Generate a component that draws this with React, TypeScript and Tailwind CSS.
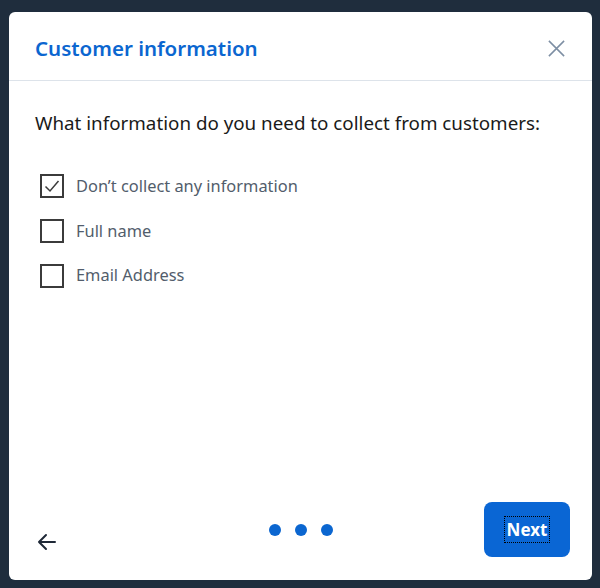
import { useState } from "react";

const options = ["Don’t collect any information", "Full name", "Email Address"];

function CheckBox({ checked }: { checked: boolean }) {
  return (
    <span className="flex h-6 w-6 shrink-0 items-center justify-center border-2 border-[#3b3b3b] bg-white">
      {checked && (
        <svg viewBox="0 0 20 20" className="h-5 w-5" fill="none" stroke="#3b3b3b" strokeWidth="1.5">
          <path d="M3.5 10.5 L8 15 L16.5 5" />
        </svg>
      )}
    </span>
  );
}

export default function App() {
  const [selected, setSelected] = useState<number[]>([0]);

  const toggle = (i: number) =>
    setSelected((s) => (s.includes(i) ? s.filter((x) => x !== i) : [...s, i]));

  return (
    <div className="h-[588px] w-[600px] bg-[#1f2d3d] pb-2 pl-[9px] pr-2 pt-3 font-['Noto_Sans',sans-serif]">
      <div className="flex h-full flex-col rounded-md bg-white">
        <div className="flex h-[69px] shrink-0 items-center justify-between border-b border-[#dde3ea] pl-[26px] pr-[26px] pt-[5px]">
          <h2 className="text-[20.5px] font-semibold text-[#0b66d0]">Customer information</h2>
          <button className="text-[#7d8ea3]">
            <svg viewBox="0 0 20 20" className="h-[19px] w-[19px]" fill="none" stroke="currentColor" strokeWidth="1.6">
              <path d="M2 2 L18 18 M18 2 L2 18" />
            </svg>
          </button>
        </div>

        <div className="flex-1 pl-[26px] pt-[28px]">
          <p className="text-[18.8px] text-[#1a1a1a]">What information do you need to collect from customers:</p>
          <ul className="mt-[37px] flex flex-col gap-[20px] pl-[5px]">
            {options.map((label, i) => (
              <li key={label} className="flex cursor-pointer items-center gap-3" onClick={() => toggle(i)}>
                <CheckBox checked={selected.includes(i)} />
                <span className="text-[16.4px] text-[#525d6b]">{label}</span>
              </li>
            ))}
          </ul>
        </div>

        <div className="grid grid-cols-3 items-center pb-[23px] pl-[26px] pr-[22px]">
          <button className="mt-6 justify-self-start text-[#1f2937]">
            <svg viewBox="0 0 24 24" className="h-6 w-6" fill="none" stroke="currentColor" strokeWidth="2" strokeLinecap="round" strokeLinejoin="round">
              <path d="M20 12 H4 M11 5 L4 12 L11 19" />
            </svg>
          </button>
          <div className="-ml-[3px] flex justify-center gap-[14px]">
            <span className="h-3 w-3 rounded-full bg-[#0b66d0]" />
            <span className="h-3 w-3 rounded-full bg-[#0b66d0]" />
            <span className="h-3 w-3 rounded-full bg-[#0b66d0]" />
          </div>
          <button className="flex h-[55px] w-[86px] items-center justify-center justify-self-end rounded-lg bg-[#0a66d4]">
            <span className="border border-dotted border-black px-[2px] text-[17px] font-bold text-white">Next</span>
          </button>
        </div>
      </div>
    </div>
  );
}
